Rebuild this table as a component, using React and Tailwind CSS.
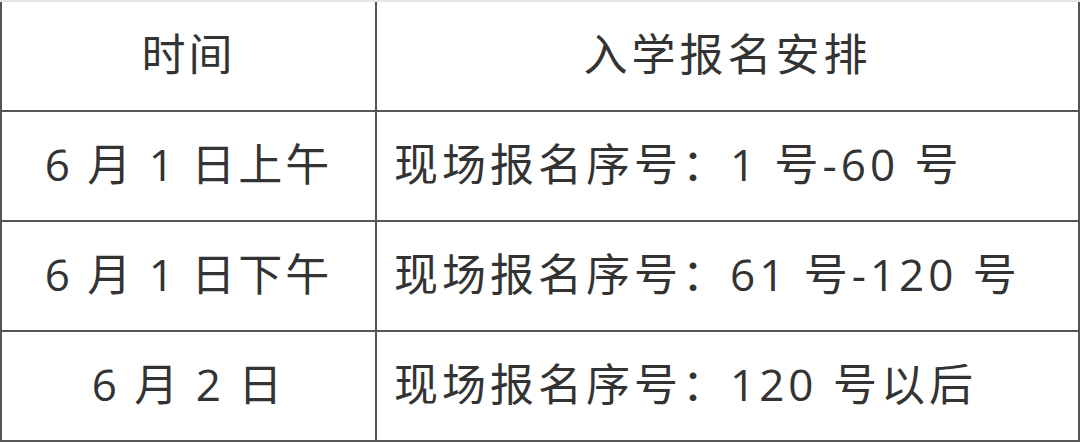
import React from "react";

const rows = [
  ["6 月 1 日上午", "现场报名序号：1 号-60 号"],
  ["6 月 1 日下午", "现场报名序号：61 号-120 号"],
  ["6 月 2 日", "现场报名序号：120 号以后"],
];

export default function App() {
  const font = { fontFamily: '"Open Sans", "Noto Sans CJK SC", sans-serif' };
  return (
    <div className="w-[1080px] h-[443px] bg-white text-[#333333]" style={font}>
      <div className="w-[1080px] border-t-2 border-t-[#e6e6e6]">
        <div className="grid grid-cols-[375px_1fr] border-l-2 border-r-2 border-b-2 border-[#555555] w-[1080px]">
          <div className="h-[108px] flex items-center justify-center border-r-2 border-[#555555] text-[44px] tracking-[3px] pb-[4px]">
            时间
          </div>
          <div className="h-[108px] flex items-center justify-center text-[44px] tracking-[4px] pb-[4px]">
            入学报名安排
          </div>
          {rows.map(([a, b], i) => (
            <React.Fragment key={i}>
              <div className="h-[110px] flex items-center justify-center border-r-2 border-t-2 border-[#555555] text-[44px] tracking-[3px] pb-[4px]">
                {a}
              </div>
              <div className="h-[110px] flex items-center pl-[17px] border-t-2 border-[#555555] text-[44px] tracking-[4px] pb-[4px]">
                {b}
              </div>
            </React.Fragment>
          ))}
        </div>
      </div>
    </div>
  );
}
